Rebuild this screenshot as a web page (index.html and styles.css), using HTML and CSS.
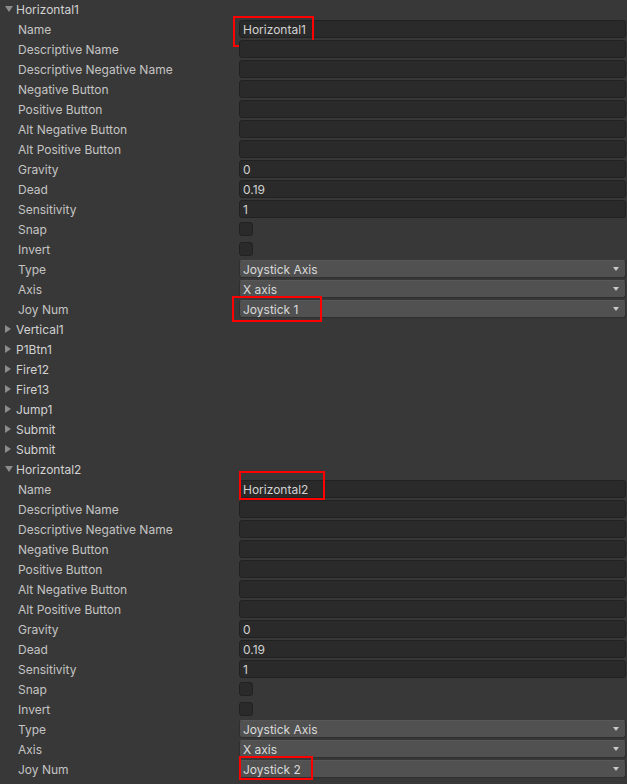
FILE: index.html
```html
<!DOCTYPE html>
<html lang="en">
  <head>
    <meta charset="UTF-8" />
    <title>Input Manager</title>
    <link rel="stylesheet" href="styles.css">
  </head>
  <body>
    <div class="inspector">
      <div class="axis-head"><span class="caret open"></span>Horizontal1</div>
      <div class="prop"><span class="label">Name</span><div class="field">Horizontal1<span class="mark mark-name1"></span></div></div>
      <div class="prop"><span class="label">Descriptive Name</span><div class="field"></div></div>
      <div class="prop"><span class="label">Descriptive Negative Name</span><div class="field"></div></div>
      <div class="prop"><span class="label">Negative Button</span><div class="field"></div></div>
      <div class="prop"><span class="label">Positive Button</span><div class="field"></div></div>
      <div class="prop"><span class="label">Alt Negative Button</span><div class="field"></div></div>
      <div class="prop"><span class="label">Alt Positive Button</span><div class="field"></div></div>
      <div class="prop"><span class="label">Gravity</span><div class="field">0</div></div>
      <div class="prop"><span class="label">Dead</span><div class="field">0.19</div></div>
      <div class="prop"><span class="label">Sensitivity</span><div class="field">1</div></div>
      <div class="prop"><span class="label">Snap</span><div class="check"></div></div>
      <div class="prop"><span class="label">Invert</span><div class="check"></div></div>
      <div class="prop"><span class="label">Type</span><div class="field dropdown">Joystick Axis</div></div>
      <div class="prop"><span class="label">Axis</span><div class="field dropdown">X axis</div></div>
      <div class="prop"><span class="label">Joy Num</span><div class="field dropdown">Joystick 1<span class="mark mark-joy1"></span></div></div>

      <div class="axis-head"><span class="caret"></span>Vertical1</div>
      <div class="axis-head"><span class="caret"></span>P1Btn1</div>
      <div class="axis-head"><span class="caret"></span>Fire12</div>
      <div class="axis-head"><span class="caret"></span>Fire13</div>
      <div class="axis-head"><span class="caret"></span>Jump1</div>
      <div class="axis-head"><span class="caret"></span>Submit</div>
      <div class="axis-head"><span class="caret"></span>Submit</div>

      <div class="axis-head"><span class="caret open"></span>Horizontal2</div>
      <div class="prop"><span class="label">Name</span><div class="field">Horizontal2<span class="mark mark-name2"></span></div></div>
      <div class="prop"><span class="label">Descriptive Name</span><div class="field"></div></div>
      <div class="prop"><span class="label">Descriptive Negative Name</span><div class="field"></div></div>
      <div class="prop"><span class="label">Negative Button</span><div class="field"></div></div>
      <div class="prop"><span class="label">Positive Button</span><div class="field"></div></div>
      <div class="prop"><span class="label">Alt Negative Button</span><div class="field"></div></div>
      <div class="prop"><span class="label">Alt Positive Button</span><div class="field"></div></div>
      <div class="prop"><span class="label">Gravity</span><div class="field">0</div></div>
      <div class="prop"><span class="label">Dead</span><div class="field">0.19</div></div>
      <div class="prop"><span class="label">Sensitivity</span><div class="field">1</div></div>
      <div class="prop"><span class="label">Snap</span><div class="check"></div></div>
      <div class="prop"><span class="label">Invert</span><div class="check"></div></div>
      <div class="prop"><span class="label">Type</span><div class="field dropdown">Joystick Axis</div></div>
      <div class="prop"><span class="label">Axis</span><div class="field dropdown">X axis</div></div>
      <div class="prop"><span class="label">Joy Num</span><div class="field dropdown">Joystick 2<span class="mark mark-joy2"></span></div></div>
    </div>
  </body>
</html>
```

FILE: styles.css
```css
body {
  margin: 0;
  padding: 0;
  background: #383838;
  font-family: Inter, "Noto Sans", sans-serif;
  font-size: 12px;
  color: #c4c4c4;
  height: 784px;
  overflow: hidden;
}

.inspector {
  display: flex;
  flex-direction: column;
  margin-top: -1px;
}

.axis-head {
  height: 20px;
  display: flex;
  align-items: center;
  padding-left: 5px;
  color: #d2d2d2;
}

.caret {
  width: 0;
  height: 0;
  margin-right: 5px;
  border-top: 4px solid transparent;
  border-bottom: 4px solid transparent;
  border-left: 6px solid #8c8c8c;
}

.caret.open {
  margin-right: 3px;
  border-left: 4px solid transparent;
  border-right: 4px solid transparent;
  border-top: 6px solid #8c8c8c;
  border-bottom: none;
}

.prop {
  height: 20px;
  display: flex;
  align-items: center;
  padding-left: 18px;
  padding-right: 1px;
}

.label {
  width: 221px;
  flex-shrink: 0;
}

.field {
  position: relative;
  flex: 1;
  height: 18px;
  box-sizing: border-box;
  background: #2a2a2a;
  border: 1px solid #212121;
  border-radius: 3px;
  padding: 1px 0 0 3px;
  line-height: 16px;
  color: #d2d2d2;
}

.field.dropdown {
  background: #515151;
  border-color: #2f2f2f;
  border-top-color: #585858;
  color: #dadada;
}

.field.dropdown::after {
  content: "";
  position: absolute;
  right: 6px;
  top: 6px;
  border-left: 3.5px solid transparent;
  border-right: 3.5px solid transparent;
  border-top: 4px solid #c8c8c8;
}

.check {
  width: 14px;
  height: 14px;
  box-sizing: border-box;
  background: #2a2a2a;
  border: 1px solid #212121;
  border-radius: 3px;
}

/* red annotation boxes */
.mark {
  position: absolute;
  box-sizing: border-box;
  border: 2px solid #f00;
}

.mark-name1 {
  left: -7px;
  top: -5px;
  width: 81px;
  height: 31px;
}

.mark-joy1 {
  left: -8px;
  top: -5px;
  width: 90px;
  height: 26px;
}

.mark-name2 {
  left: -1px;
  top: -10px;
  width: 86px;
  height: 29px;
}

.mark-joy2 {
  left: -1px;
  top: -5px;
  width: 74px;
  height: 24px;
}
```
